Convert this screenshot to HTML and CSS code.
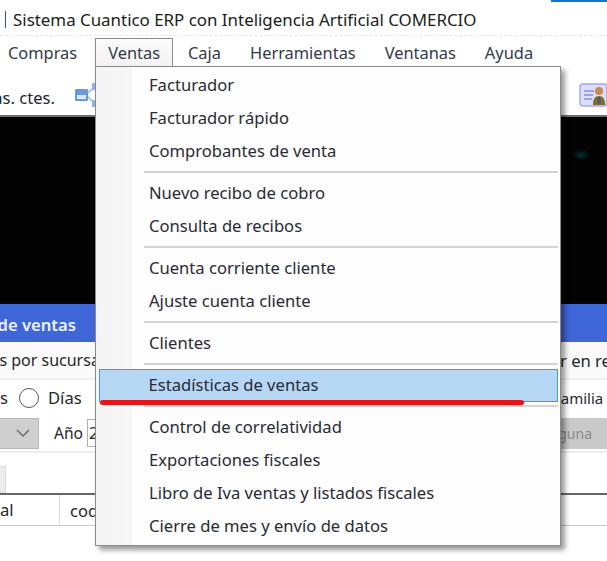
FILE: index.html
```html
<!DOCTYPE html>
<html lang="es">
<head>
<meta charset="utf-8">
<title>Sistema Cuantico ERP</title>
<link rel="stylesheet" href="styles.css">
</head>
<body>
<div class="window">
  <div class="accent"></div>
  <header class="titlebar"><span class="bar-mark"></span><span>Sistema Cuantico ERP con Inteligencia Artificial COMERCIO</span></header>
  <nav class="menubar">
    <span class="menu-name">Compras</span>
    <span class="menu-name open">Ventas</span>
    <span class="menu-name">Caja</span>
    <span class="menu-name">Herramientas</span>
    <span class="menu-name">Ventanas</span>
    <span class="menu-name">Ayuda</span>
  </nav>
  <div class="toolbar">
    <div class="tool-left">
      <span class="clip-left tool-text"><span>Ctas. ctes.</span></span>
      <svg class="net-icon" width="22" height="26" viewBox="0 0 22 26">
        <path d="M10 13 L20 5 M10 13 L20 21" stroke="#a9c3ea" stroke-width="2" fill="none"/>
        <rect x="0" y="7" width="13" height="12" rx="1" fill="#6a98de"/>
        <rect x="2" y="13" width="9" height="4" fill="#dfe8f6"/>
        <rect x="17" y="1" width="5" height="7" fill="#8fb3e8"/>
        <rect x="17" y="18" width="5" height="7" fill="#8fb3e8"/>
      </svg>
    </div>
    <svg class="card-icon" width="28" height="26" viewBox="0 0 28 26">
      <rect x="1" y="2" width="27" height="22" rx="3" fill="#dcdef8" stroke="#a5a8e6" stroke-width="1.5"/>
      <path d="M5 9h10M5 13h9M5 17h8" stroke="#8a8ed2" stroke-width="1.4"/>
      <circle cx="20" cy="9" r="4" fill="#c88a52"/>
      <path d="M14 23c0-6 2-9 6-9s6 3 6 9z" fill="#7d6a2c"/>
      <path d="M19 15h2l.5 7h-3z" fill="#3f5f86"/>
    </svg>
  </div>
  <div class="dark"></div>
  <div class="panel-title"><span class="clip-left left-cell"><span>Estadísticas de ventas</span></span></div>
  <div class="row row-tabs">
    <span class="clip-left left-cell"><span>Ventas por sucursal</span></span>
    <span class="right-cell report">Ver en reporte</span>
  </div>
  <div class="row row-radios">
    <div class="left-cell radios">
      <span class="clip-text">s</span>
      <span class="radio"></span>
      <span class="radio-label">Días</span>
    </div>
    <span class="right-cell family">Familia</span>
  </div>
  <div class="row row-combos">
    <div class="left-cell combos">
      <div class="combo">
        <svg width="14" height="8" viewBox="0 0 14 8"><path d="M1 1l6 6 6-6" fill="none" stroke="#666" stroke-width="1.4"/></svg>
      </div>
      <span class="year-label">Año</span>
      <span class="year-input">2</span>
    </div>
    <div class="right-cell none-box"><span>Ninguna</span></div>
  </div>
  <div class="row row-tabstrip"><span class="tab-stub"></span></div>
  <div class="table-head">
    <span class="col col-a">al</span>
    <span class="col col-b">cod</span>
  </div>

  <div class="dropdown">
    <div class="item">Facturador</div>
    <div class="item">Facturador rápido</div>
    <div class="item">Comprobantes de venta</div>
    <div class="sep"></div>
    <div class="item">Nuevo recibo de cobro</div>
    <div class="item">Consulta de recibos</div>
    <div class="sep"></div>
    <div class="item">Cuenta corriente cliente</div>
    <div class="item">Ajuste cuenta cliente</div>
    <div class="sep"></div>
    <div class="item">Clientes</div>
    <div class="sep"></div>
    <div class="item active">Estadísticas de ventas</div>
    <div class="sep"></div>
    <div class="item">Control de correlatividad</div>
    <div class="item">Exportaciones fiscales</div>
    <div class="item">Libro de Iva ventas y listados fiscales</div>
    <div class="item">Cierre de mes y envío de datos</div>
  </div>
  <div class="red-mark"></div>
</div>
</body>
</html>
```

FILE: styles.css
```css
* { box-sizing: border-box; }
html, body { margin: 0; padding: 0; }
body {
  width: 607px;
  height: 561px;
  overflow: hidden;
  background: #fff;
  font-family: "Noto Sans", "Open Sans", sans-serif;
  font-size: 16.6px;
  color: #26262e;
}
.window { position: relative; width: 607px; height: 561px; overflow: hidden; }
.accent { position: absolute; top: 0; right: 0; width: 56px; height: 2px; background: #0a78d4; }

.titlebar {
  height: 36px;
  padding: 3px 0 0 5px;
  display: flex;
  align-items: center;
  gap: 7px;
  font-size: 16.9px;
  color: #1c1c1c;
  border-bottom: 1px dashed #e6e6e6;
}
.bar-mark { width: 1px; height: 17px; background: #2a5a9a; }

.menubar { height: 30px; display: flex; align-items: center; padding: 3px 0 0 8px; font-size: 16.4px; }
.menu-name { margin-right: 29px; line-height: 27px; white-space: nowrap; color: #33394a; }
.menu-name.open {
  margin: 0 15px 0 -11px;
  padding: 0 12px;
  height: 28px;
  align-self: flex-end;
  border: 1.5px solid #8b8b8b;
  border-bottom: none;
  background: linear-gradient(#fbfbfb, #f3f3f3);
}

.toolbar {
  height: 51px;
  display: flex;
  justify-content: space-between;
  align-items: center;
  padding-top: 8px;
  border-bottom: 2px solid #6f6f6f;
}
.tool-left { display: flex; align-items: center; gap: 20px; }
.clip-left { display: flex; justify-content: flex-end; overflow: hidden; white-space: nowrap; width: 55px; }
.clip-left > span { flex: none; }
.tool-text { margin-top: 5px; }
.net-icon { display: block; }
.card-icon { display: block; }

.dark {
  height: 187px;
  background: radial-gradient(ellipse 9px 6px at 581px 38px, #0a3035 0, #051a1d 45%, #030303 100%) #030303;
}
.panel-title {
  height: 38px;
  padding-top: 3px;
  background: #3f66d8;
  color: #eef2ff;
  font-weight: 600;
  display: flex;
  align-items: center;
}
.left-cell { width: 110px; flex: none; }
.panel-title .left-cell { width: 76px; }
.row { display: flex; align-items: center; justify-content: space-between; }
.row-tabs { height: 38px; background: #fafafa; border-bottom: 2px solid #f0f0f0; font-size: 16px; }
.row-tabs .left-cell { width: 104px; }
.right-cell { flex: none; white-space: nowrap; overflow: hidden; }
.report { width: 66px; font-size: 16.6px; }
.row-radios { height: 35px; background: #fff; }
.radios { display: flex; align-items: center; }
.clip-text { width: 19px; }
.radio { flex: none; width: 20px; height: 20px; border: 1.5px solid #555; border-radius: 50%; background: #fff; }
.radio-label { margin-left: 9px; }
.family { width: 50px; font-size: 15px; margin-right: 4px; }
.row-combos { height: 38px; border-bottom: 2px solid #ededed; }
.combos { display: flex; align-items: center; }
.combo {
  flex: none;
  width: 39px;
  height: 31px;
  background: #cfcfcf;
  border: 1px solid #b5b5b5;
  border-left: none;
  display: flex;
  align-items: center;
  justify-content: flex-end;
  padding-right: 8px;
}
.year-label { margin-left: 15px; font-size: 15.6px; }
.year-input {
  flex: none;
  margin-left: 4px;
  width: 12px;
  height: 28px;
  border: 1px solid #b0b0b0;
  border-right: none;
  line-height: 26px;
  padding-left: 1px;
  overflow: hidden;
}
.none-box {
  width: 110px;
  height: 31px;
  display: flex;
  justify-content: flex-end;
  align-items: center;
  padding-right: 15px;
  background: #c9c9c9;
  color: #8a8a8a;
  font-size: 14px;
}
.row-tabstrip { height: 42px; border-bottom: 2px solid #666; align-items: flex-end; }
.tab-stub { width: 6px; height: 27px; background: #ececec; border: 1px solid #ddd; border-left: none; }
.table-head {
  height: 31px;
  display: flex;
  align-items: center;
  border-bottom: 1px solid #c8c8c8;
}
.col-a { width: 60px; height: 100%; border-right: 1px solid #dcdcdc; line-height: 30px; }
.col-b { padding-left: 10px; }

.dropdown {
  position: absolute;
  left: 95px;
  top: 66px;
  width: 466px;
  height: 480px;
  padding: 2px 2px;
  background: linear-gradient(to right, #f4f4f4 0, #f7f7f7 36px, #fdfdfd 36px);
  border: 1.5px solid #8b8b8b;
  box-shadow: 4px 4px 5px rgba(0, 0, 0, 0.4);
}
.item {
  height: 33px;
  line-height: 31px;
  padding-left: 51px;
  white-space: nowrap;
  color: #2a2a36;
}
.item.active {
  margin: 0 0 0 1px;
  padding-left: 48.5px;
  line-height: 30px;
  background: #b5d7f3;
  border: 1.5px solid #3f9ae6;
}
.sep { height: 9px; margin-left: 46px; display: flex; }
.sep::before { content: ""; width: 100%; height: 2px; margin-top: 3px; background: #d4d4d4; }
.red-mark {
  position: absolute;
  left: 100px;
  top: 400px;
  width: 424px;
  height: 5px;
  background: #e4161c;
  border-radius: 3px;
}
```
